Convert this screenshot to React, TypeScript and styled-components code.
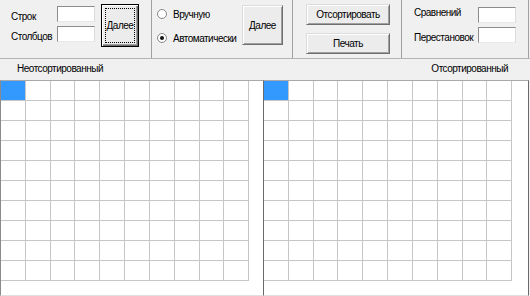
import React from 'react';
import styled, { createGlobalStyle } from 'styled-components';

const GlobalStyle = createGlobalStyle`
  html, body {
    margin: 0;
    padding: 0;
    background: #f0f0f0;
  }
  body {
    font-family: "Liberation Sans", Arial, sans-serif;
    font-size: 10px;
    letter-spacing: -0.5px;
    color: #000;
  }
`;

const ROWS = 10;
const COLS = 10;

const Window = styled.div`
  width: 530px;
  height: 296px;
  display: flex;
  flex-direction: column;
  overflow: hidden;
  background: #f0f0f0;
`;

const Toolbar = styled.div`
  display: flex;
  height: 58px;
  border-bottom: 1px solid #b4b4b4;
`;

const Group = styled.div<{ $width: number }>`
  display: flex;
  width: ${p => p.$width}px;
  border-right: 1px solid #a0a0a0;
  box-sizing: border-box;
`;

const Fields = styled.div<{ $label: number; $top: number; $left: number }>`
  display: grid;
  grid-template-columns: ${p => p.$label}px 38px;
  grid-auto-rows: 16px;
  row-gap: 4px;
  margin: ${p => p.$top}px 0 0 ${p => p.$left}px;
`;

const Label = styled.span<{ $dy?: number }>`
  line-height: 12px;
  white-space: nowrap;
  padding-top: ${p => p.$dy ?? 2}px;
`;

const TextBox = styled.div`
  box-sizing: border-box;
  width: 38px;
  height: 16px;
  background: #fff;
  border: 1px solid;
  border-color: #8c8c8c #dcdcdc #e8e8e8 #8c8c8c;
`;

const Button = styled.button<{ $w: number; $h: number; $mt?: number; $ml?: number; $default?: boolean }>`
  position: relative;
  box-sizing: border-box;
  width: ${p => p.$w}px;
  height: ${p => p.$h}px;
  margin: ${p => p.$mt ?? 0}px 0 0 ${p => p.$ml ?? 0}px;
  padding: 0;
  font: inherit;
  letter-spacing: inherit;
  color: #000;
  background: #ececec;
  border: 1px solid;
  border-color: ${p => (p.$default ? '#000' : '#dcdcdc #6e6e6e #6e6e6e #dcdcdc')};
  box-shadow: ${p =>
    p.$default
      ? 'inset 1px 1px #fff, inset -1px -1px #6e6e6e, inset -2px -2px #a0a0a0'
      : 'inset 1px 1px #fff, inset -1px -1px #a0a0a0'};
  outline: none;

  /* focus rectangle of the default button */
  &::after {
    content: "";
    display: ${p => (p.$default ? 'block' : 'none')};
    position: absolute;
    inset: 3px;
    border: 1px dotted #000;
  }
`;

const RadioList = styled.div`
  display: flex;
  flex-direction: column;
  gap: 12px;
  width: 85px;
  margin: 8px 0 0 5px;
`;

const RadioRow = styled.label`
  display: flex;
  align-items: center;
  gap: 6px;
  height: 12px;
  white-space: nowrap;
`;

const RadioDot = styled.span<{ $checked?: boolean }>`
  display: flex;
  align-items: center;
  justify-content: center;
  box-sizing: border-box;
  width: 10px;
  height: 10px;
  border-radius: 50%;
  background: #fff;
  border: 1px solid #8a8a8a;

  &::after {
    content: "";
    width: 4px;
    height: 4px;
    border-radius: 50%;
    background: ${p => (p.$checked ? '#111' : 'transparent')};
  }
`;

const ButtonStack = styled.div`
  display: flex;
  flex-direction: column;
  gap: 8px;
  margin: 4px 0 0 13px;
`;

const Headers = styled.div`
  display: flex;
  justify-content: space-between;
  align-items: center;
  height: 21px;
  padding: 0 22px 2px 17px;
  box-sizing: border-box;
`;

const Panels = styled.div`
  display: flex;
  flex: 1;
`;

const Panel = styled.div<{ $width: number; $right?: boolean }>`
  width: ${p => p.$width}px;
  box-sizing: border-box;
  background: #fff;
  border-top: 1px solid #a8a8a8;
  border-left: 1px solid ${p => (p.$right ? '#6a6a6a' : '#8a8a8a')};
  border-right: ${p => (p.$right ? '1px solid #6a6a6a' : 'none')};
  border-bottom: 1px solid #e0e0e0;
`;

const Grid = styled.div`
  display: grid;
  grid-template-columns: 24px 24px 23px 24px 24px 24px 24px 24px 23px 24px;
  grid-auto-rows: 19px;
  gap: 1px;
  width: max-content;
  background: #c6c6c6;
  border-right: 1px solid #c6c6c6;
  border-bottom: 1px solid #c6c6c6;
`;

const Cell = styled.div<{ $selected?: boolean }>`
  background: ${p => (p.$selected ? '#3399ff' : '#fff')};
`;

const CellGrid: React.FC = () => (
  <Grid>
    {Array.from({ length: ROWS * COLS }, (_, i) => (
      <Cell key={i} $selected={i === 0} />
    ))}
  </Grid>
);

export default function App() {
  return (
    <>
      <GlobalStyle />
      <Window>
        <Toolbar>
          <Group $width={152}>
            <Fields $label={46} $top={6} $left={11}>
              <Label $dy={5}>Строк</Label>
              <TextBox />
              <Label $dy={5}>Столбцов</Label>
              <TextBox />
            </Fields>
            <Button $w={38} $h={43} $mt={4} $ml={6} $default>
              Далее
            </Button>
          </Group>

          <Group $width={141}>
            <RadioList>
              <RadioRow>
                <RadioDot />
                Вручную
              </RadioRow>
              <RadioRow>
                <RadioDot $checked />
                Автоматически
              </RadioRow>
            </RadioList>
            <Button $w={41} $h={40} $mt={5}>
              Далее
            </Button>
          </Group>

          <Group $width={109}>
            <ButtonStack>
              <Button $w={84} $h={21}>Отсортировать</Button>
              <Button $w={84} $h={21}>Печать</Button>
            </ButtonStack>
          </Group>

          <Group $width={127}>
            <Fields $label={64} $top={7} $left={12}>
              <Label $dy={0}>Сравнений</Label>
              <TextBox />
              <Label $dy={5}>Перестановок</Label>
              <TextBox />
            </Fields>
          </Group>
        </Toolbar>

        <Headers>
          <span>Неотсортированный</span>
          <span>Отсортированный</span>
        </Headers>

        <Panels>
          <Panel $width={263}>
            <CellGrid />
          </Panel>
          <Panel $width={266} $right>
            <CellGrid />
          </Panel>
        </Panels>
      </Window>
    </>
  );
}
